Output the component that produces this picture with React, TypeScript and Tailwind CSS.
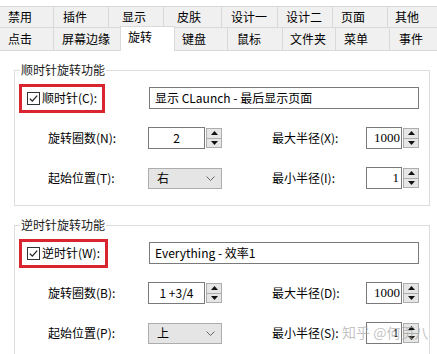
import React from "react";

const rowOne = [
  { t: "禁用", c: "w-[53px] pl-[8px]" },
  { t: "插件", c: "w-[55px] pl-[9px] border-l border-[#d9d9d9]" },
  { t: "显示", c: "w-[55px] pl-[13px] border-l border-[#d9d9d9]" },
  { t: "皮肤", c: "w-[58px] pl-[13px] border-l border-[#d9d9d9]" },
  { t: "设计一", c: "w-[56px] pl-[9px] border-l border-[#d9d9d9]" },
  { t: "设计二", c: "w-[55px] pl-[8px] border-l border-[#d9d9d9]" },
  { t: "页面", c: "w-[55px] pl-[8px] border-l border-[#d9d9d9]" },
  { t: "其他", c: "w-[50px] pl-[7px] border-l border-[#d9d9d9]" },
];

const rowTwo = [
  { t: "点击", c: "w-[53px] pl-[8px]" },
  { t: "屏幕边缘", c: "w-[67px] pl-[8px] border-l border-[#d9d9d9]" },
  { t: "旋转", c: "w-[55px] pl-[7px] pb-[4px] -mt-[2px] -mb-[1px] bg-white border-x border-t border-[#d9d9d9]" },
  { t: "键盘", c: "w-[52px] pl-[7px]" },
  { t: "鼠标", c: "w-[55px] pl-[9px] border-l border-[#d9d9d9]" },
  { t: "文件夹", c: "w-[53px] pl-[7px] border-l border-[#d9d9d9]" },
  { t: "菜单", c: "w-[54px] pl-[8px] border-l border-[#d9d9d9]" },
  { t: "事件", c: "w-[48px] pl-[9px] border-l border-[#d9d9d9]" },
];

function Tabs() {
  return (
    <div className="pt-[6px]">
      <div className="flex h-[21px] border-t border-[#d9d9d9] bg-[#f0f0f0]">
        {rowOne.map((tab) => (
          <div key={tab.t} className={`flex items-center ${tab.c}`}>
            {tab.t}
          </div>
        ))}
      </div>
      <div className="flex h-[24px] border-y border-[#d9d9d9] bg-[#f0f0f0]">
        {rowTwo.map((tab) => (
          <div key={tab.t} className={`flex items-center ${tab.c}`}>
            {tab.t}
          </div>
        ))}
      </div>
    </div>
  );
}

function Check() {
  return (
    <svg width="13" height="13" viewBox="0 0 13 13" className="shrink-0">
      <rect x="0.5" y="0.5" width="12" height="12" fill="#fff" stroke="#333" />
      <path d="M2.8 6.6 L5.3 9.1 L10.2 3.6" fill="none" stroke="#222" strokeWidth="1.3" />
    </svg>
  );
}

function Arrow({ up }: { up?: boolean }) {
  return (
    <svg width="7" height="4" viewBox="0 0 7 4">
      <polygon points={up ? "0,4 7,4 3.5,0" : "0,0 7,0 3.5,4"} fill="#111" />
    </svg>
  );
}

function Spin({ value, box, text }: { value: string; box: string; text: string }) {
  return (
    <div className={`flex h-[22px] ${box}`}>
      <div className={`flex flex-1 items-center border border-[#7a7a7a] bg-white ${text}`}>{value}</div>
      <div className="ml-[1px] flex w-[16px] flex-col py-[1px]">
        <div className="flex flex-1 items-center justify-center border border-[#adadad] bg-[#e6e6e6]">
          <Arrow up />
        </div>
        <div className="flex flex-1 items-center justify-center border border-t-0 border-[#adadad] bg-[#e6e6e6]">
          <Arrow />
        </div>
      </div>
    </div>
  );
}

function Select({ value }: { value: string }) {
  return (
    <div className="flex h-[21px] w-[74px] items-center justify-between border border-[#adadad] bg-[#e5e5e5] pl-[8px] pr-[6px]">
      <span>{value}</span>
      <svg width="9" height="5" viewBox="0 0 9 5">
        <path d="M0.5 0.5 L4.5 4.5 L8.5 0.5" fill="none" stroke="#666" />
      </svg>
    </div>
  );
}

type GroupProps = {
  title: string;
  check: string;
  entry: string;
  turns: [string, string];
  start: [string, string];
  maxR: string;
  minR: string;
  turnsValue: string;
  startValue: string;
};

function Group(p: GroupProps) {
  return (
    <fieldset className="mt-[11px] ml-[14px] mr-[7px] border border-[#dcdcdc] pb-[7px]">
      <legend className="ml-[5px] px-[1px] leading-[16px] text-[#1a1a1a]">{p.title}</legend>
      <div className="flex h-[40px] items-center pl-[4px]">
        <div className="w-[130px]">
          <div className="inline-flex h-[29px] items-center gap-[2px] border-[3px] border-[#d9262e] px-[5px]">
            <Check />
            <span>{p.check}</span>
          </div>
        </div>
        <div className="flex h-[22px] w-[270px] items-center border border-[#7a7a7a] bg-white pl-[5px]">
          {p.entry}
        </div>
      </div>
      <div className="flex h-[40px] items-center">
        <div className="ml-[33px] w-[100px]">{p.turns[0]}</div>
        <Spin value={p.turnsValue} box="w-[74px]" text="justify-center" />
        <div className="ml-[50px] w-[94px]">{p.turns[1]}</div>
        <Spin
          value={p.maxR}
          box="w-[53px]"
          text="justify-end pr-[1px] font-['Liberation_Serif',serif] text-[13px]"
        />
      </div>
      <div className="flex h-[40px] items-center">
        <div className="ml-[33px] w-[100px]">{p.start[0]}</div>
        <Select value={p.startValue} />
        <div className="ml-[50px] w-[94px]">{p.start[1]}</div>
        <Spin
          value={p.minR}
          box="w-[53px]"
          text="justify-end pr-[2px] font-['Liberation_Serif',serif] text-[13px]"
        />
      </div>
    </fieldset>
  );
}

export default function App() {
  return (
    <div className="relative h-[354px] w-[437px] overflow-hidden bg-white text-[12px] leading-[16px] text-black font-['Microsoft_YaHei','Noto_Sans_CJK_SC',sans-serif]">
      <Tabs />
      <Group
        title="顺时针旋转功能"
        check="顺时针(C):"
        entry="显示 CLaunch - 最后显示页面"
        turns={["旋转圈数(N):", "最大半径(X):"]}
        start={["起始位置(T):", "最小半径(I):"]}
        turnsValue="2"
        startValue="右"
        maxR="1000"
        minR="1"
      />
      <Group
        title="逆时针旋转功能"
        check="逆时针(W):"
        entry="Everything - 效率1"
        turns={["旋转圈数(B):", "最大半径(D):"]}
        start={["起始位置(P):", "最小半径(S):"]}
        turnsValue="1 +3/4"
        startValue="上"
        maxR="1000"
        minR="1"
      />
      <div className="absolute left-[342px] top-[324px] text-[14px] leading-[16px] text-[#a8a8a8]/70">
        知乎 @何页八
      </div>
    </div>
  );
}
